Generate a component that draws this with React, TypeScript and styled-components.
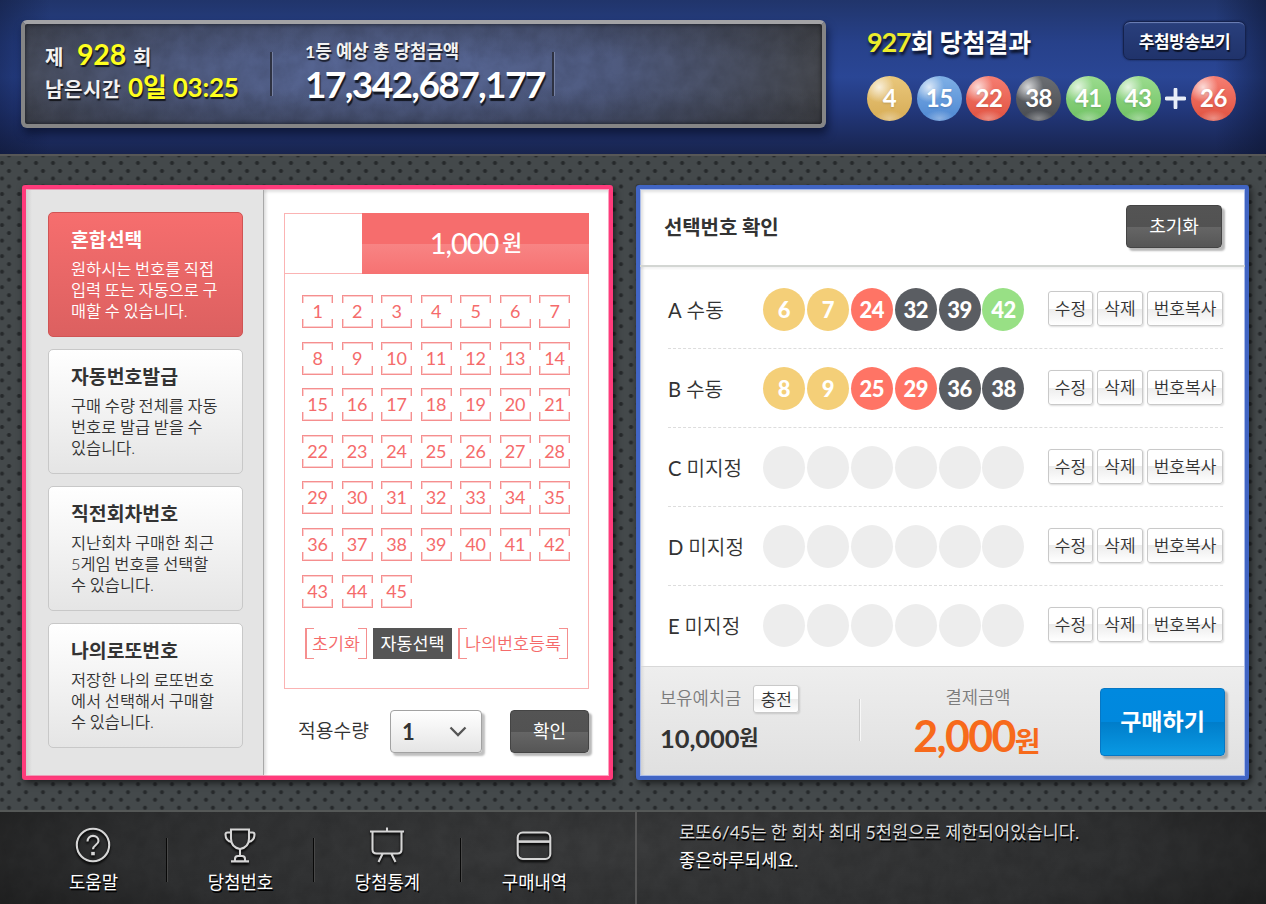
import React from "react";
import styled, { createGlobalStyle } from "styled-components";

const GlobalStyle = createGlobalStyle`
  * {
    box-sizing: border-box;
  }
  body {
    margin: 0;
    font-family: Lato, "Noto Sans CJK KR", sans-serif;
    color: #333;
  }
  button {
    font-family: inherit;
    padding: 0;
    margin: 0;
    cursor: pointer;
  }
`;

// brushed metal grain, laid over the dark surfaces
const grain = `url("data:image/svg+xml,%3Csvg xmlns='http://www.w3.org/2000/svg' width='600' height='110'%3E%3Cfilter id='g' x='0' y='0' width='100%25' height='100%25'%3E%3CfeTurbulence type='fractalNoise' baseFrequency='0.06 0.05' numOctaves='5' stitchTiles='stitch'/%3E%3CfeColorMatrix values='0 0 0 0 0 0 0 0 0 0 0 0 0 0 0 0.9 0 0 0 -0.25'/%3E%3C/filter%3E%3Crect width='600' height='110' filter='url(%23g)' opacity='0.2'/%3E%3C/svg%3E")`;

const Page = styled.div`
  width: 1266px;
  height: 904px;
  overflow: hidden;
  display: flex;
  flex-direction: column;
  background-color: #44494b;
  background-image: radial-gradient(circle, #26292b 1.6px, rgba(38, 41, 43, 0) 2.4px),
    radial-gradient(circle, #26292b 1.6px, rgba(38, 41, 43, 0) 2.4px);
  background-size: 17px 15.54px;
  background-position: -6.5px 155.2px, 0.5px 163.2px;
`;

/* ---------- header ---------- */

const Header = styled.header`
  display: flex;
  height: 156px;
  padding: 20px 20px 0 21px;
  border-bottom: 2px solid #575757;
  background: linear-gradient(90deg, rgba(12, 20, 48, 0.4), rgba(12, 20, 48, 0) 4%, rgba(12, 20, 48, 0) 96%, rgba(12, 20, 48, 0.55)),
    linear-gradient(180deg, #21356b 0%, #27418a 28%, #2a4695 50%, #22377a 72%, #18244e 100%);
`;

const Display = styled.div`
  display: flex;
  width: 805px;
  height: 108px;
  border: 4px solid #858585;
  border-top-color: #a3a3a6;
  border-radius: 6px;
  background: ${grain},
    linear-gradient(180deg, rgba(35, 37, 45, 0.3), rgba(35, 37, 45, 0) 35%, rgba(35, 37, 45, 0) 65%, rgba(35, 37, 45, 0.4)),
    radial-gradient(ellipse 440px 190px at 46% 42%, #586899, #4f5b80 50%, #44464b 100%);
  box-shadow: 2px 6px 9px rgba(5, 10, 30, 0.6), inset 0 0 4px rgba(0, 0, 0, 0.6);
`;

const RoundInfo = styled.div`
  width: 247px;
  height: 44px;
  margin-top: 28px;
  border-right: 2px solid #2e3242;
  box-shadow: 1px 0 0 #7580a2;
`;

const InfoLine = styled.div<{ $lift: number }>`
  height: 33px;
  margin: ${(p) => p.$lift}px 0 0 20px;
  display: flex;
  align-items: baseline;
  line-height: 33px;
  font-size: 20px;
  font-weight: 700;
  letter-spacing: 0.6px;
  color: #f2f2f2;
  white-space: nowrap;
  text-shadow: 1px 2px 1px rgba(0, 0, 0, 0.7);
`;

const Yellow = styled.span<{ $size: number; $left: number; $right?: number }>`
  margin: 0 ${(p) => p.$right || 0}px 0 ${(p) => p.$left}px;
  font-size: ${(p) => p.$size}px;
  letter-spacing: -0.2px;
  color: #ffff1e;
`;

const Jackpot = styled.div`
  width: 282px;
  height: 44px;
  margin-top: 28px;
  border-right: 2px solid #2e3242;
  box-shadow: 1px 0 0 #7580a2;
  padding-left: 33px;
`;

const JackpotLabel = styled.div`
  margin-top: -14px;
  font-size: 17.8px;
  line-height: 26px;
  font-weight: 700;
  color: #f2f2f2;
  white-space: nowrap;
  text-shadow: 1px 2px 1px rgba(0, 0, 0, 0.7);
`;

const JackpotAmount = styled.div`
  margin-top: -1px;
  font-size: 37px;
  line-height: 42px;
  font-weight: 700;
  letter-spacing: -1.6px;
  color: #fff;
  white-space: nowrap;
  text-shadow: 1px 3px 1px rgba(0, 0, 0, 0.75);
`;

const Result = styled.div`
  flex: 1;
  padding: 1px 0 0 41px;
`;

const ResultTop = styled.div`
  display: flex;
  justify-content: space-between;
`;

const ResultTitle = styled.div`
  font-size: 25px;
  line-height: 42px;
  font-weight: 700;
  letter-spacing: -0.1px;
  color: #fff;
  text-shadow: 1px 3px 3px rgba(0, 0, 0, 0.8);

  span {
    font-size: 27px;
    color: #ecec2c;
    letter-spacing: -1.1px;
  }
`;

const BroadcastButton = styled.button`
  width: 123px;
  height: 39px;
  border: 1px solid #15224d;
  border-radius: 7px;
  background: linear-gradient(#293f7c, #20336b);
  box-shadow: inset 0 2px 1px -1px #7183b8, 0 0 2px #101b40;
  color: #fff;
  font-size: 17px;
  font-weight: 700;
  letter-spacing: -0.4px;
  text-shadow: 1px 2px 1px rgba(0, 0, 0, 0.7);
`;

const ResultBalls = styled.div`
  display: flex;
  align-items: center;
  justify-content: space-between;
  width: 369px;
  margin-top: 13px;
`;

const glossy: Record<string, string> = {
  yellow: "#e9c77c, #d7ac55",
  blue: "#7fb0e6, #4d87d2",
  red: "#f67e72, #e0513f",
  gray: "#6b6e73, #484b50",
  green: "#9bdc8e, #6fc163",
};

const GlossyBall = styled.span<{ $tone: string }>`
  width: 45px;
  height: 45px;
  border-radius: 50%;
  background: radial-gradient(circle at 27% 25%, rgba(255, 255, 255, 0.75), rgba(255, 255, 255, 0) 32%),
    radial-gradient(ellipse 15px 8px at 50% 94%, rgba(255, 255, 255, 0.35), rgba(255, 255, 255, 0)),
    linear-gradient(${(p) => glossy[p.$tone]});
  color: #fff;
  font-size: 24px;
  font-weight: 700;
  line-height: 43px;
  letter-spacing: -0.5px;
  text-align: center;
  text-shadow: 0 1px 2px rgba(0, 0, 0, 0.15);
`;

/* ---------- main panels ---------- */

const Main = styled.main`
  display: flex;
  gap: 23px;
  height: 654px;
  padding: 29px 0 0 22px;
`;

const Panel = styled.section<{ $tone: string; $edge: string; $width: number }>`
  width: ${(p) => p.$width}px;
  height: 595px;
  border: 4px solid ${(p) => p.$tone};
  border-radius: 3px;
  background: #fff;
  box-shadow: inset 0 0 0 1px ${(p) => p.$edge}, inset 3px 3px 3px rgba(0, 0, 0, 0.12), 2px 3px 7px rgba(0, 0, 0, 0.6);
`;

const SelectPanel = styled(Panel)`
  display: flex;
`;

const Methods = styled.nav`
  display: flex;
  flex-direction: column;
  gap: 12px;
  width: 238px;
  margin: 1px 0 1px 0;
  padding: 22px 0 0 22px;
  border-right: 1px solid #a8a8a8;
  background: linear-gradient(90deg, #cfcfcf, #e4e4e4 6px);
  box-shadow: 2px 0 3px rgba(0, 0, 0, 0.14);
`;

const MethodCard = styled.div<{ $active?: boolean }>`
  width: 195px;
  height: 125px;
  padding: 13px 0 0 22px;
  border: 1px solid ${(p) => (p.$active ? "#d05454" : "#c8c8c8")};
  border-radius: 5px;
  background: ${(p) => (p.$active ? "linear-gradient(#f66e6e, #dc6060)" : "linear-gradient(#fff, #e5e5e5)")};
  color: ${(p) => (p.$active ? "#fff" : "#333")};

  h3 {
    margin: 0;
    font-size: 19.4px;
    line-height: 28px;
    font-weight: 700;
  }
  p {
    margin: 4px 0 0;
    font-size: 16.4px;
    font-weight: 350;
    line-height: 21px;
    white-space: pre;
    word-spacing: -0.8px;
  }
`;

const Picker = styled.div`
  padding: 24px 0 0 20px;
`;

const Sheet = styled.div`
  width: 305px;
  height: 476px;
  border: 1px solid #fbb3b3;
`;

const SheetHead = styled.div`
  display: flex;
  justify-content: flex-end;
  height: 60px;
  border-bottom: 1px solid #fbb3b3;
`;

const Price = styled.div`
  display: flex;
  justify-content: center;
  width: 227px;
  height: 61px;
  margin: -1px -1px 0 0;
  background: linear-gradient(#f66d6d 0, #f66d6d 31px, #f88484 31px, #f67272 100%);
  color: #fff;
  font-size: 29px;
  line-height: 60px;
  letter-spacing: -1.1px;

  span {
    font-size: 22px;
    font-weight: 500;
    line-height: 59px;
    margin-left: 4px;
  }
`;

const Numbers = styled.div`
  display: grid;
  grid-template-columns: repeat(7, 39.5px);
  grid-auto-rows: 46.6px;
  margin: 21px 0 0 17px;
`;

const NumberCell = styled.div`
  width: 31px;
  height: 33px;
  background: linear-gradient(#f58f8f, #f58f8f) 0 0 / 100% 1px no-repeat,
    linear-gradient(#f58f8f, #f58f8f) 0 100% / 100% 1px no-repeat,
    linear-gradient(#f58f8f 8px, transparent 8px, transparent 24px, #f58f8f 24px) 0 0 / 1px 100% no-repeat,
    linear-gradient(#f58f8f 8px, transparent 8px, transparent 24px, #f58f8f 24px) 100% 0 / 1px 100% no-repeat,
    linear-gradient(#fcd0d0, #fcd0d0) 0 1px / 100% 1px no-repeat,
    linear-gradient(#fcd0d0, #fcd0d0) 0 31px / 100% 1px no-repeat,
    linear-gradient(#fcd0d0 8px, transparent 8px, transparent 24px, #fcd0d0 24px) 1px 0 / 1px 100% no-repeat,
    linear-gradient(#fcd0d0 8px, transparent 8px, transparent 24px, #fcd0d0 24px) 29px 0 / 1px 100% no-repeat;
  color: #f56b6b;
  font-size: 18px;
  line-height: 33px;
  letter-spacing: -0.3px;
  text-align: center;
`;

const SheetActions = styled.div`
  display: flex;
  gap: 6px;
  margin: 7px 0 0 20px;
`;

const BracketButton = styled.button<{ $width: number }>`
  width: ${(p) => p.$width}px;
  height: 31px;
  padding-bottom: 2px;
  border: 0;
  background: linear-gradient(#f58f8f, #f58f8f) 0 0 / 2px 100% no-repeat,
    linear-gradient(#f58f8f, #f58f8f) 100% 0 / 1px 100% no-repeat,
    linear-gradient(90deg, #f58f8f 9px, transparent 9px, transparent calc(100% - 9px), #f58f8f 0) 0 0 / 100% 1px no-repeat,
    linear-gradient(90deg, #f58f8f 9px, transparent 9px, transparent calc(100% - 9px), #f58f8f 0) 0 100% / 100% 1px no-repeat;
  color: #f56b6b;
  font-size: 17.4px;
  font-weight: 350;
  white-space: nowrap;
`;

const AutoButton = styled.button`
  width: 79px;
  height: 31px;
  padding-bottom: 2px;
  border: 0;
  background: #555;
  color: #fff;
  font-size: 17.4px;
`;

const Apply = styled.div`
  display: flex;
  align-items: center;
  margin-top: 21px;
  padding-left: 14px;
  font-size: 19.3px;
`;

const ApplyLabel = styled.span`
  width: 92px;
  margin-top: -4px;
  font-weight: 350;
`;

const QuantitySelect = styled.div`
  display: flex;
  align-items: center;
  justify-content: space-between;
  width: 92px;
  height: 43px;
  padding: 0 14px 0 11px;
  border: 1px solid #a2a2a2;
  border-radius: 4px;
  background: linear-gradient(#fff, #e5e5e5);
  box-shadow: 3px 3px 2px rgba(0, 0, 0, 0.25);
  font-size: 22px;
  font-weight: 700;
`;

const DarkButton = styled.button<{ $width: number }>`
  width: ${(p) => p.$width}px;
  height: 43px;
  padding-bottom: 4px;
  border: 1px solid #444;
  border-radius: 4px;
  background: linear-gradient(#545454 0, #525252 50%, #666 50%, #565656 100%);
  box-shadow: 3px 3px 2px rgba(0, 0, 0, 0.28);
  color: #fff;
  font-size: 18px;
`;

const ConfirmButton = styled(DarkButton)`
  margin-left: 28px;
`;

/* ---------- selected numbers ---------- */

const CheckPanel = styled(Panel)`
  display: flex;
  flex-direction: column;
`;

const CheckHead = styled.div`
  display: flex;
  justify-content: space-between;
  height: 78px;
  padding: 16px 23px 0 25px;
  border-bottom: 2px solid #d3d6d3;
  box-shadow: 0 2px 2px rgba(0, 0, 0, 0.05);

  h2 {
    margin: 0 0 0 -1px;
    font-size: 20px;
    line-height: 45px;
    letter-spacing: -0.1px;
  }
`;

const GameRow = styled.div`
  display: flex;
  align-items: center;
  height: 79px;
  margin: 0 22px 0 28px;
  border-bottom: 1px dashed #ddd;

  &:last-child {
    border-bottom-color: transparent;
  }
`;

const Games = styled.div`
  height: 399px;
  padding-top: 3px;
`;

const GameName = styled.div`
  flex: none;
  width: 95px;
  font-size: 20.2px;
  font-weight: 350;
  white-space: nowrap;

  b {
    font-weight: 400;
    letter-spacing: -0.6px;
  }
`;

const GameBalls = styled.div`
  display: flex;
  flex: none;
  gap: 1.9px;
  width: 285px;
`;

const flat: Record<string, string> = {
  yellow: "#f4cf78",
  red: "#ff7465",
  gray: "#5a5d62",
  green: "#98e085",
  empty: "#ededed",
};

const FlatBall = styled.span<{ $tone: string }>`
  width: 42px;
  height: 43px;
  border-radius: 50%;
  background: ${(p) => flat[p.$tone]};
  color: #fff;
  font-size: 22px;
  font-weight: 900;
  line-height: 44px;
  letter-spacing: -0.5px;
  text-align: center;
`;

const RowButtons = styled.div`
  display: flex;
  flex: none;
  gap: 4px;
  margin-top: -2px;
`;

const LightButton = styled.button<{ $width: number; $height?: number }>`
  width: ${(p) => p.$width}px;
  height: ${(p) => p.$height || 35}px;
  padding-bottom: 2px;
  border: 1px solid #c9c9c9;
  border-radius: 3px;
  background: linear-gradient(#fff 0, #fff 50%, #ececec 50%, #fff 100%);
  box-shadow: 1px 1px 2px rgba(0, 0, 0, 0.14);
  color: #333;
  font-size: 17px;
  font-weight: 350;
  white-space: nowrap;
`;

const Payment = styled.div`
  display: flex;
  flex: 1;
  margin: 0 1px 1px;
  padding-left: 19px;
  border-top: 1px solid #d8d8d8;
  background: linear-gradient(90deg, rgba(0, 0, 0, 0.08), rgba(0, 0, 0, 0) 4px), linear-gradient(#eee, #e0e0e0);
`;

const Deposit = styled.div`
  width: 199px;
`;

const DepositTop = styled.div`
  display: flex;
  align-items: center;
  gap: 12px;
  height: 28px;
  margin-top: 18px;
  color: #7c7c7c;
  font-size: 17.7px;
  font-weight: 350;
  line-height: 22px;

  span {
    margin-top: -1px;
  }
`;

const DepositAmount = styled.div`
  display: flex;
  margin-top: 7px;
  font-size: 25.5px;
  line-height: 37px;
  font-weight: 700;
  letter-spacing: -0.1px;

  span {
    font-size: 21px;
    line-height: 33px;
  }
`;

const PaymentRule = styled.div`
  width: 2px;
  height: 42px;
  margin-top: 32px;
  border-left: 1px solid #ccc;
  background: #f8f8f8;
`;

const Total = styled.div`
  width: 234px;
  margin-top: 17px;
  color: #7c7c7c;
  font-size: 17.7px;
  font-weight: 350;
  line-height: 28px;
  text-align: center;
`;

const TotalAmount = styled.div`
  margin-left: -4px;
  color: #f76a1b;
  font-size: 43px;
  line-height: 47px;
  font-weight: 700;
  letter-spacing: -1.7px;

  span {
    font-size: 28px;
  }
`;

const BuyButton = styled.button`
  width: 125px;
  height: 68px;
  margin: 21px 0 0 5px;
  padding-bottom: 5px;
  border: 1px solid #0777c4;
  border-radius: 4px;
  background: linear-gradient(#0089df 0, #0088dd 50%, #007dca 50%, #0999e3 100%);
  box-shadow: 3px 3px 2px rgba(0, 0, 0, 0.25);
  color: #fff;
  font-size: 23px;
  font-weight: 700;
`;

/* ---------- footer ---------- */

const Footer = styled.footer`
  display: flex;
  height: 94px;
  border-top: 2px solid #555857;
  background: ${grain}, radial-gradient(ellipse 66% 140% at 50% 40%, #3a3b3c, #2f3031 60%, #191919 100%);
`;

const Menu = styled.div`
  display: flex;
  width: 637px;
  padding-left: 20px;
  border-right: 2px solid #555;
`;

const MenuItem = styled.div`
  display: flex;
  flex-direction: column;
  align-items: center;
  width: 147px;
  padding-top: 15px;
  color: #fff;
  font-size: 17.8px;
  line-height: 26px;
  text-shadow: 1px 2px 0 #000;
  background: linear-gradient(#080808, #080808) 100% 26px / 1px 44px no-repeat,
    linear-gradient(#484848, #484848) 0 26px / 1px 44px no-repeat;

  &:first-child {
    background: linear-gradient(#080808, #080808) 100% 26px / 1px 44px no-repeat;
  }
  &:last-child {
    background: linear-gradient(#484848, #484848) 0 26px / 1px 44px no-repeat;
  }
  svg {
    margin: 0 2px 6px 0;
    fill: none;
    stroke: #d6d6d6;
    stroke-width: 2.1;
    filter: drop-shadow(0 2px 1px #000);
  }
`;

const Notice = styled.div`
  padding: 7px 0 0 42px;
  color: #ddd;
  font-size: 17.65px;
  line-height: 28px;
  text-shadow: 1px 2px 0 #000;

  strong {
    display: block;
    font-weight: 400;
    letter-spacing: 0.2px;
    color: #fff;
  }
`;

const methods = [
  { title: "혼합선택", text: "원하시는 번호를 직접\n입력 또는 자동으로 구\n매할 수 있습니다." },
  { title: "자동번호발급", text: "구매 수량 전체를 자동\n번호로 발급 받을 수\n있습니다." },
  { title: "직전회차번호", text: "지난회차 구매한 최근\n5게임 번호를 선택할\n수 있습니다." },
  { title: "나의로또번호", text: "저장한 나의 로또번호\n에서 선택해서 구매할\n수 있습니다." },
];

const games = [
  { name: "A", type: "수동", numbers: [6, 7, 24, 32, 39, 42] },
  { name: "B", type: "수동", numbers: [8, 9, 25, 29, 36, 38] },
  { name: "C", type: "미지정", numbers: [] },
  { name: "D", type: "미지정", numbers: [] },
  { name: "E", type: "미지정", numbers: [] },
];

const tone = (n?: number) => {
  if (!n) return "empty";
  if (n <= 10) return "yellow";
  if (n <= 20) return "blue";
  if (n <= 30) return "red";
  if (n <= 40) return "gray";
  return "green";
};

const HelpIcon = () => (
  <svg width="36" height="36" viewBox="0 0 36 36">
    <circle cx="18" cy="18" r="16.2" />
    <path d="M12.500 14.500c0-3.400 2.300-5.600 5.500-5.600s5.500 2.100 5.500 5.100c0 3.900-5.500 4.200-5.500 8.200" />
    <path d="M16.200 26.600h3.600" strokeWidth="3.400" />
  </svg>
);

const TrophyIcon = () => (
  <svg width="36" height="36" viewBox="0 0 36 36">
    <path d="M9 2.500h18v9c0 6-3.800 9.500-9 10.500-5.200-1-9-4.500-9-10.500z" />
    <path d="M9 5.500H5.500Q3.500 5.500 3.500 7.500c0 4 2.500 7 6.500 7.500M27 5.500h3.500q2 0 2 2c0 4-2.500 7-6.500 7.500M18 22V28.500M13 34v-2q0-3 3-3h4q3 0 3 3v2M9 34.400h18" />
  </svg>
);

const ChartIcon = () => (
  <svg width="36" height="36" viewBox="0 0 36 36">
    <path d="M18 0.500v4M1 4.500h34M3.500 4.500v18q0 4 4 4h21q4 0 4-4V4.500M13.500 27L9.500 35M22.500 27l4 8" />
  </svg>
);

const CardIcon = () => (
  <svg width="36" height="36" viewBox="0 0 36 36">
    <rect x="1.700" y="5.500" width="32.600" height="26.500" rx="5" />
    <path d="M2 14.600h32" strokeWidth="2.600" />
  </svg>
);

const App: React.FC = () => {
  return (
    <>
      <GlobalStyle />
      <Page>
        <Header>
          <Display>
            <RoundInfo>
              <InfoLine $lift={-14}>
                제<Yellow $size={28.5} $left={13} $right={7}>928</Yellow>회
              </InfoLine>
              <InfoLine $lift={0}>
                남은시간<Yellow $size={26} $left={7}>0일 03:25</Yellow>
              </InfoLine>
            </RoundInfo>
            <Jackpot>
              <JackpotLabel>1등 예상 총 당첨금액</JackpotLabel>
              <JackpotAmount>17,342,687,177</JackpotAmount>
            </Jackpot>
          </Display>
          <Result>
            <ResultTop>
              <ResultTitle>
                <span>927</span>회 당첨결과
              </ResultTitle>
              <BroadcastButton>추첨방송보기</BroadcastButton>
            </ResultTop>
            <ResultBalls>
              {[4, 15, 22, 38, 41, 43].map((n) => (
                <GlossyBall key={n} $tone={tone(n)}>{n}</GlossyBall>
              ))}
              <svg width="21" height="21" viewBox="0 0 21 21">
                <path d="M10.500 1.500v18M1.500 10.500h18" stroke="#e8eef8" strokeWidth="3.800" strokeLinecap="round" />
              </svg>
              <GlossyBall $tone="red">26</GlossyBall>
            </ResultBalls>
          </Result>
        </Header>

        <Main>
          <SelectPanel $tone="#ff3b7b" $edge="#fba5c1" $width={591}>
            <Methods>
              {methods.map((m, i) => (
                <MethodCard key={m.title} $active={i === 0}>
                  <h3>{m.title}</h3>
                  <p>{m.text}</p>
                </MethodCard>
              ))}
            </Methods>
            <Picker>
              <Sheet>
                <SheetHead>
                  <Price>1,000<span>원</span></Price>
                </SheetHead>
                <Numbers>
                  {Array.from({ length: 45 }, (_, i) => (
                    <NumberCell key={i}>{i + 1}</NumberCell>
                  ))}
                </Numbers>
                <SheetActions>
                  <BracketButton $width={62}>초기화</BracketButton>
                  <AutoButton>자동선택</AutoButton>
                  <BracketButton $width={110}>나의번호등록</BracketButton>
                </SheetActions>
              </Sheet>
              <Apply>
                <ApplyLabel>적용수량</ApplyLabel>
                <QuantitySelect>
                  1
                  <svg width="18" height="11" viewBox="0 0 18 11">
                    <path d="M1.500 1.500L9 9l7.500-7.500" fill="none" stroke="#555" strokeWidth="2.300" />
                  </svg>
                </QuantitySelect>
                <ConfirmButton $width={79}>확인</ConfirmButton>
              </Apply>
            </Picker>
          </SelectPanel>

          <CheckPanel $tone="#4165c4" $edge="#a9bbea" $width={613}>
            <CheckHead>
              <h2>선택번호 확인</h2>
              <DarkButton $width={96}>초기화</DarkButton>
            </CheckHead>
            <Games>
              {games.map((g) => (
                <GameRow key={g.name}>
                  <GameName><b>{g.name}</b> {g.type}</GameName>
                  <GameBalls>
                    {Array.from({ length: 6 }, (_, i) => (
                      <FlatBall key={i} $tone={tone(g.numbers[i])}>{g.numbers[i]}</FlatBall>
                    ))}
                  </GameBalls>
                  <RowButtons>
                    <LightButton $width={45}>수정</LightButton>
                    <LightButton $width={46}>삭제</LightButton>
                    <LightButton $width={76}>번호복사</LightButton>
                  </RowButtons>
                </GameRow>
              ))}
            </Games>
            <Payment>
              <Deposit>
                <DepositTop>
                  <span>보유예치금</span>
                  <LightButton $width={46} $height={28}>충전</LightButton>
                </DepositTop>
                <DepositAmount>10,000<span>원</span></DepositAmount>
              </Deposit>
              <PaymentRule />
              <Total>
                결제금액
                <TotalAmount>2,000<span>원</span></TotalAmount>
              </Total>
              <BuyButton>구매하기</BuyButton>
            </Payment>
          </CheckPanel>
        </Main>

        <Footer>
          <Menu>
            <MenuItem><HelpIcon />도움말</MenuItem>
            <MenuItem><TrophyIcon />당첨번호</MenuItem>
            <MenuItem><ChartIcon />당첨통계</MenuItem>
            <MenuItem><CardIcon />구매내역</MenuItem>
          </Menu>
          <Notice>
            로또6/45는 한 회차 최대 5천원으로 제한되어있습니다.
            <strong>좋은하루되세요.</strong>
          </Notice>
        </Footer>
      </Page>
    </>
  );
};

export default App;
